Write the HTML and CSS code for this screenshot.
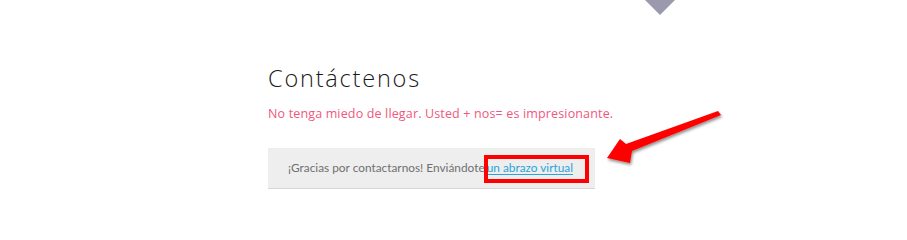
FILE: index.html
```html
<!DOCTYPE html>
<html lang="es">
<head>
<meta charset="utf-8">
<link rel="stylesheet" href="styles.css">
</head>
<body>
<div class="page">
  <div class="notch"></div>
  <section class="contact">
    <h1 class="title">Contáctenos</h1>
    <p class="lead">No tenga miedo de llegar. Usted + nos= es impresionante.</p>
    <div class="notice">
      <span>¡Gracias por contactarnos! Enviándote</span><span class="mark"><a class="link" href="#">un abrazo virtual</a><span class="highlight"></span></span>
    </div>
  </section>
  <svg class="arrow" width="907" height="240" viewBox="0 0 907 240">
    <defs>
      <filter id="sh" x="-20%" y="-20%" width="140%" height="160%">
        <feDropShadow dx="1" dy="2" stdDeviation="1.5" flood-color="#000" flood-opacity="0.45"/>
      </filter>
    </defs>
    <polygon filter="url(#sh)" fill="#ff0000" points="718,111 721,115 632,151 630,163 607,158 620,139 626,144"/>
  </svg>
</div>
</body>
</html>
```
FILE: styles.css
```css
html, body {
  margin: 0;
  padding: 0;
  background: #ffffff;
}
.page {
  position: relative;
  width: 907px;
  height: 240px;
  overflow: hidden;
}
.notch {
  position: absolute;
  left: 645px;
  top: 0;
  width: 0;
  height: 0;
  border-left: 15.5px solid transparent;
  border-right: 15.5px solid transparent;
  border-top: 15px solid #9b99ad;
}
.contact {
  padding: 62px 0 0 268px;
  display: flex;
  flex-direction: column;
  align-items: flex-start;
}
.title {
  margin: 0;
  font-family: "Open Sans", sans-serif;
  font-weight: 300;
  font-size: 23.5px;
  line-height: 32px;
  letter-spacing: 1.8px;
  color: #1a1a1a;
}
.lead {
  margin: 11px 0 0 0;
  font-family: "Open Sans", sans-serif;
  font-size: 12.5px;
  line-height: 18px;
  letter-spacing: 0.15px;
  color: #f0587c;
}
.notice {
  margin-top: 25px;
  box-sizing: border-box;
  width: 327px;
  height: 41px;
  padding: 11px 0 0 20px;
  background: #eeeeee;
  border-bottom: 1px solid #d6d6d6;
  font-family: "Lato", sans-serif;
  font-size: 11.85px;
  line-height: 17px;
  color: #707070;
  white-space: nowrap;
}
.mark {
  position: relative;
  margin-left: 2px;
}
.link {
  color: #2aa3da;
  text-decoration: underline;
  text-underline-offset: 2px;
}
.highlight {
  position: absolute;
  left: -3px;
  top: -5px;
  width: 105px;
  height: 28px;
  box-sizing: border-box;
  border: 4px solid #ff0000;
}
.arrow {
  position: absolute;
  left: 0;
  top: 0;
}
```
